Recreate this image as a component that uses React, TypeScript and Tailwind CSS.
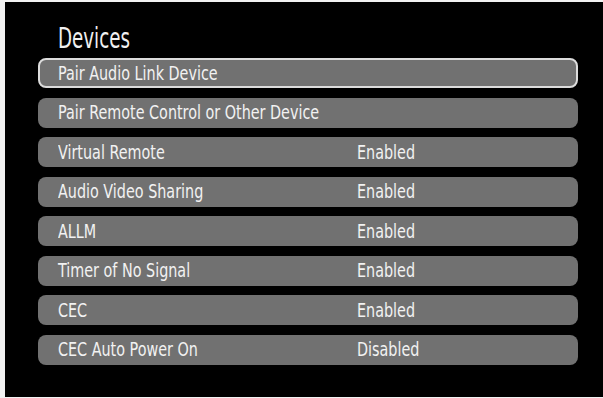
const rows: { label: string; value?: string }[] = [
  { label: 'Pair Audio Link Device' },
  { label: 'Pair Remote Control or Other Device' },
  { label: 'Virtual Remote', value: 'Enabled' },
  { label: 'Audio Video Sharing', value: 'Enabled' },
  { label: 'ALLM', value: 'Enabled' },
  { label: 'Timer of No Signal', value: 'Enabled' },
  { label: 'CEC', value: 'Enabled' },
  { label: 'CEC Auto Power On', value: 'Disabled' },
];

// TV menu font is tall and narrow, squeeze the condensed face a bit more
function Narrow({ children }: { children: React.ReactNode }) {
  return <span className="inline-block origin-left scale-x-[0.84]">{children}</span>;
}

export default function App() {
  return (
    <div
      className="w-[603px] h-[398px] bg-[#f2f2f2] pl-[5px] pt-[2px] pb-[1px] overflow-hidden font-stretch-condensed"
      style={{ fontFamily: '"DejaVu Sans Condensed", "DejaVu Sans", sans-serif' }}
    >
      <div className="h-full bg-black pt-[18px] pl-[33px] pr-[25px]">
        <h1 className="pl-[20px] text-[29px] leading-[36px] text-[#f0f0f0] h-[38px] whitespace-nowrap">
          <span className="inline-block origin-left scale-x-[0.7]">Devices</span>
        </h1>
        <div className="flex flex-col gap-[9.5px]">
          {rows.map((r, i) => (
            <div
              key={r.label}
              className={
                'h-[30px] rounded-[8px] bg-[#717171] flex items-center text-[19px] text-[#f2f2f2] whitespace-nowrap ' +
                (i === 0 ? 'border-2 border-[#dcdcdc] pl-[18px]' : 'pl-[20px]')
              }
            >
              <span className="w-[299px] shrink-0">
                <Narrow>{r.label}</Narrow>
              </span>
              {r.value && <Narrow>{r.value}</Narrow>}
            </div>
          ))}
        </div>
      </div>
    </div>
  );
}
